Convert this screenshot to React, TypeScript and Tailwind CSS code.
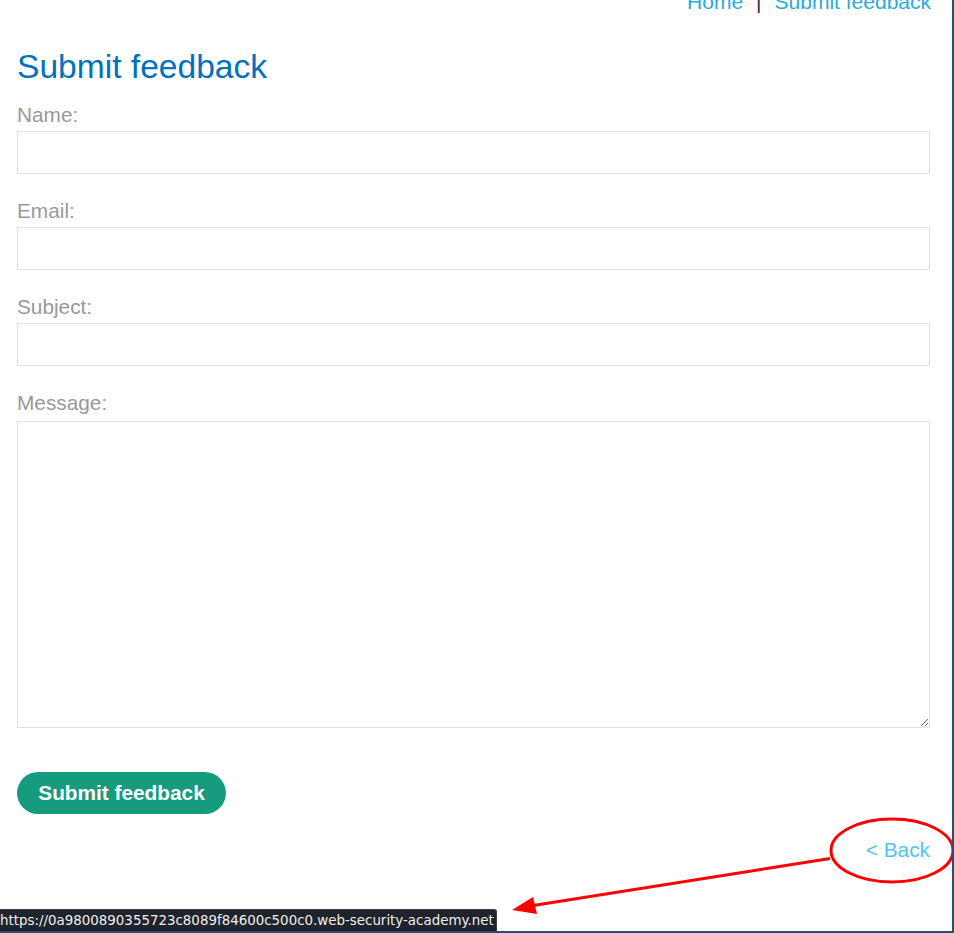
import React from "react";

export default function App() {
  const labelCls = "block h-[24px] leading-[24px] text-[20.8px] text-[#999999]";
  const inputCls = "block w-[913px] border border-[#e0e0e0] bg-white outline-none";
  return (
    <div className="relative w-[954px] h-[933px] overflow-hidden bg-white border-r-2 border-b-2 border-[#25507a] font-['Liberation_Sans',Arial,sans-serif]">
      <div className="pl-[17px]">
        <div className="mt-[-10px] h-[24px] leading-[24px] text-[21px] flex justify-end pr-[21px]">
          <a className="text-[#29abe0]">Home</a>
          <span className="mx-[13px] text-[#333333]">|</span>
          <a className="text-[#29abe0]">Submit feedback</a>
        </div>
        <h1 className="mt-[33px] h-[40px] leading-[40px] text-[33.6px] text-[#0071bc]">Submit feedback</h1>
        <form className="mt-[16px]">
          <label className={labelCls}>Name:</label>
          <input className={`${inputCls} mt-[4px] h-[43px]`} />
          <label className={`${labelCls} mt-[25px]`}>Email:</label>
          <input className={`${inputCls} mt-[4px] h-[43px]`} />
          <label className={`${labelCls} mt-[25px]`}>Subject:</label>
          <input className={`${inputCls} mt-[4px] h-[43px]`} />
          <label className={`${labelCls} mt-[25px]`}>Message:</label>
          <textarea className={`${inputCls} mt-[6px] h-[307px]`} />
          <button
            type="button"
            className="mt-[44px] h-[42px] w-[209px] rounded-full bg-[#179b7f] text-white font-bold text-[20.8px] leading-[42px]"
          >
            Submit feedback
          </button>
        </form>
        <div className="mt-[24px] flex justify-end pr-[22px]">
          <a className="h-[24px] leading-[24px] text-[20.8px] text-[#4fc3f7]">&lt; Back</a>
        </div>
      </div>

      <svg className="absolute left-0 top-0 pointer-events-none" width="954" height="933">
        <ellipse cx="892" cy="850.5" rx="61" ry="31.5" fill="none" stroke="#ff0000" strokeWidth="3" />
        <line x1="830" y1="858.5" x2="530" y2="906" stroke="#ff0000" strokeWidth="3" />
        <polygon points="512,910 533,897 537,914" fill="#ff0000" />
      </svg>

      <div className="absolute left-0 top-[909px] h-[22px] w-[497px] bg-[#1f232b] rounded-tr-[3px] border-t border-r border-[#3a3f48] text-[#f0f0f0] text-[13.4px] leading-[21px] font-['DejaVu_Sans',sans-serif] whitespace-nowrap">
        https://0a9800890355723c8089f84600c500c0.web-security-academy.net
      </div>
    </div>
  );
}
